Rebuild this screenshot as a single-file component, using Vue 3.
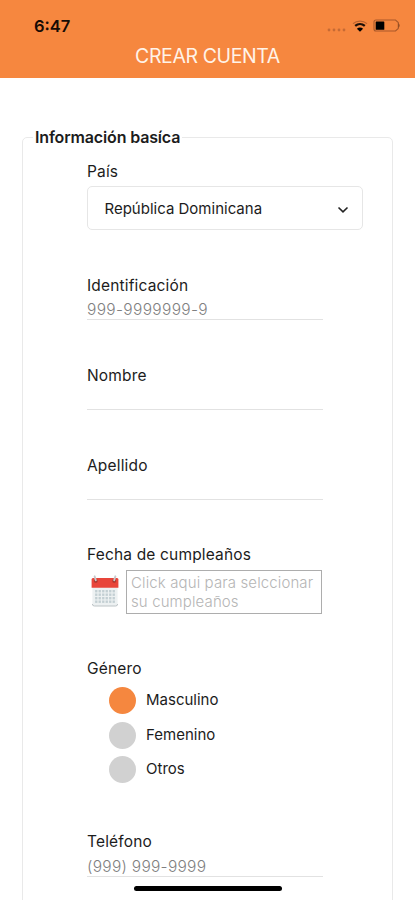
<script setup>
import { ref } from 'vue'

const genders = ['Masculino', 'Femenino', 'Otros']
const gender = ref('Masculino')
const cells = []
for (let r = 0; r < 4; r++) for (let c = 0; c < 6; c++) cells.push({ x: 5.2 + c * 3.5, y: 15 + r * 3.5 })
</script>

<template>
  <main class="screen">
    <header class="header">
      <div class="status">
        <span class="time">6:47</span>
        <div class="indicators">
          <svg class="signal" width="20" height="4" viewBox="0 0 20 4">
            <circle v-for="n in 4" :key="n" :cx="n * 5 - 3" cy="2" r="1.4" fill="#c66a34" />
          </svg>
          <svg class="wifi" width="16" height="12" viewBox="0 0 16 12">
            <path d="M1 3.6C5 .2 11 .2 15 3.6" fill="none" stroke="#b8622f" stroke-width="1.2" />
            <path d="M3.2 5.9C6 3.5 10 3.5 12.8 5.9" fill="none" stroke="#1c0f08" stroke-width="2.3" />
            <path d="M4.9 8.8C6.8 7.2 9.2 7.2 11.1 8.8L8 11.7Z" fill="#000" />
          </svg>
          <svg class="battery" width="28" height="13" viewBox="0 0 28 13">
            <path d="M3 1H22.5L25.3 3.5V9.5L22.5 12H3Q1 12 1 10V3Q1 1 3 1Z" fill="none" stroke="#a9592a" stroke-width="1.1" />
            <rect x="2.7" y="2.4" width="8.6" height="8.4" rx="0.6" fill="#000" />
            <path d="M25.3 4Q28 6.5 25.3 9Z" fill="#8a4721" />
          </svg>
        </div>
      </div>
      <h1 class="title"><span>CREAR CUENTA</span></h1>
    </header>

    <fieldset class="card">
      <legend class="legend"><span>Información basíca</span></legend>

      <section class="field country">
        <label class="label">País</label>
        <div class="select">
          <span>República Dominicana</span>
          <svg width="12" height="8" viewBox="0 0 12 8">
            <path d="M1.5 1.5L6 5.8L10.5 1.5" fill="none" stroke="#222" stroke-width="1.6" />
          </svg>
        </div>
      </section>

      <section class="field">
        <label class="label">Identificación</label>
        <div class="input"><span class="ph-id">999-9999999-9</span></div>
      </section>
      <section class="field">
        <label class="label">Nombre</label>
        <div class="input"></div>
      </section>
      <section class="field">
        <label class="label">Apellido</label>
        <div class="input"></div>
      </section>

      <section class="field birthday">
        <label class="label high">Fecha de cumpleaños</label>
        <div class="date-row">
          <svg class="calendar" width="28" height="32" viewBox="0 0 28 32">
            <path d="M1.4 10H26.6V29Q26.6 31 24.6 31H3.4Q1.4 31 1.4 29Z" fill="#edf1f2" />
            <path d="M1.4 29Q1.4 31 3.4 31H24.6Q26.6 31 26.6 29" fill="none" stroke="#bcc3c6" stroke-width="1" />
            <path d="M.6 4.6Q.6 3.1 2 3.1H26Q27.4 3.1 27.4 4.6V12.8H.6Z" fill="#e8453a" />
            <g fill="#c3cfd3">
              <rect v-for="(c, i) in cells" :key="i" :x="c.x - 1.1" :y="c.y" width="2.3" height="2.4" />
            </g>
            <g fill="#a93931"><circle cx="4.8" cy="5.9" r="1.9" /><circle cx="23.2" cy="5.9" r="1.9" /></g>
            <g stroke="#c9c9cb" stroke-width="1.9" stroke-linecap="round">
              <path d="M3.6 1.3L4.8 5.2M24.4 1.3L23.2 5.2" />
            </g>
          </svg>
          <div class="date">Click aqui para selccionar<br />su cumpleaños</div>
        </div>
      </section>

      <section class="field gender">
        <label class="label high">Género</label>
        <div class="options">
          <div v-for="g in genders" :key="g" class="option" @click="gender = g">
            <i class="dot" :class="{ on: gender === g }"></i>
            <span>{{ g }}</span>
          </div>
        </div>
      </section>

      <section class="field">
        <label class="label high">Teléfono</label>
        <div class="input"><span class="ph-tel">(999) 999-9999</span></div>
      </section>
    </fieldset>

    <div class="home"></div>
  </main>
</template>

<style>
body { background: #fff; overflow: hidden; }
</style>

<style scoped>
* { box-sizing: border-box; }
.screen {
  position: relative;
  width: 415px;
  height: 900px;
  overflow: hidden;
  background: #fff;
  color: #1c1c1c;
  font-family: Inter, "Liberation Sans", sans-serif;
  white-space: nowrap;
}
.header { height: 78px; background: #f6873f; }
.status {
  height: 44px;
  padding: 16px 14px 0 34px;
  display: flex;
  justify-content: space-between;
  align-items: flex-start;
}
.time { font-size: 16.5px; line-height: 20px; font-weight: 600; color: #160b05; }
.indicators { display: flex; align-items: flex-start; padding-top: 3px; }
.signal { margin-top: 9px; }
.wifi { margin: 1px 0 0 5px; }
.battery { margin: 0 0 0 5px; }
.title {
  margin: 0;
  font-size: 19.5px;
  line-height: 24px;
  letter-spacing: -0.4px;
  font-weight: 400;
  text-align: center;
  color: #fff3e8;
}
.card {
  width: 371px;
  height: 800px;
  margin: 49px 0 0 22px;
  padding: 14px 0 0 64px;
  border: 1.5px solid #e9e9e9;
  border-radius: 5px;
  min-width: 0;
}
.legend {
  margin-left: -54px;
  padding: 0 2px;
  font-size: 16px;
  line-height: 20px;
  letter-spacing: -0.15px;
  font-weight: 600;
}
.field { height: 90px; width: 236px; }
.label { display: block; height: 20px; font-size: 15.5px; line-height: 22px; letter-spacing: 0.17px; }
.label.high { line-height: 20px; }
.country { height: 114px; width: 276px; }
.select {
  height: 44px;
  margin-top: 5px;
  padding: 0 13px 0 16.5px;
  display: flex;
  align-items: center;
  justify-content: space-between;
  border: 1.5px solid #e6e6e6;
  border-radius: 5px;
  font-size: 15px;
}
.select svg { margin-top: 4px; }
.input {
  height: 25px;
  padding-top: 5px;
  border-bottom: 1.5px solid #e2e2e2;
  font-size: 15.5px;
  line-height: 20px;
  color: #808080;
  font-weight: 300;
}
.ph-id { letter-spacing: 0.34px; }
.ph-tel { letter-spacing: 0.28px; }
.birthday { height: 114px; }
.date-row { display: flex; align-items: flex-start; padding: 5px 0 0 4px; }
.calendar { margin-top: 5px; }
.date {
  width: 196px;
  height: 44px;
  margin-left: 7px;
  padding: 2px 0 0 4px;
  border: 1px solid #adadad;
  font-size: 15px;
  line-height: 19px;
  letter-spacing: 0.12px;
  font-weight: 300;
  color: #b5b5b5;
}
.gender { height: 173px; }
.options { padding: 8px 0 0 22px; display: grid; gap: 7.5px; }
.option { display: flex; align-items: center; gap: 10px; font-size: 15px; line-height: 20px; height: 27px; }
.dot { width: 27px; height: 27px; border-radius: 50%; background: #d1d1d1; }
.dot.on { background: #f5873f; }
.option span { margin-top: -1px; }
.home {
  position: absolute;
  left: 134px;
  top: 886px;
  width: 148px;
  height: 5px;
  border-radius: 3px;
  background: #000;
}
</style>
